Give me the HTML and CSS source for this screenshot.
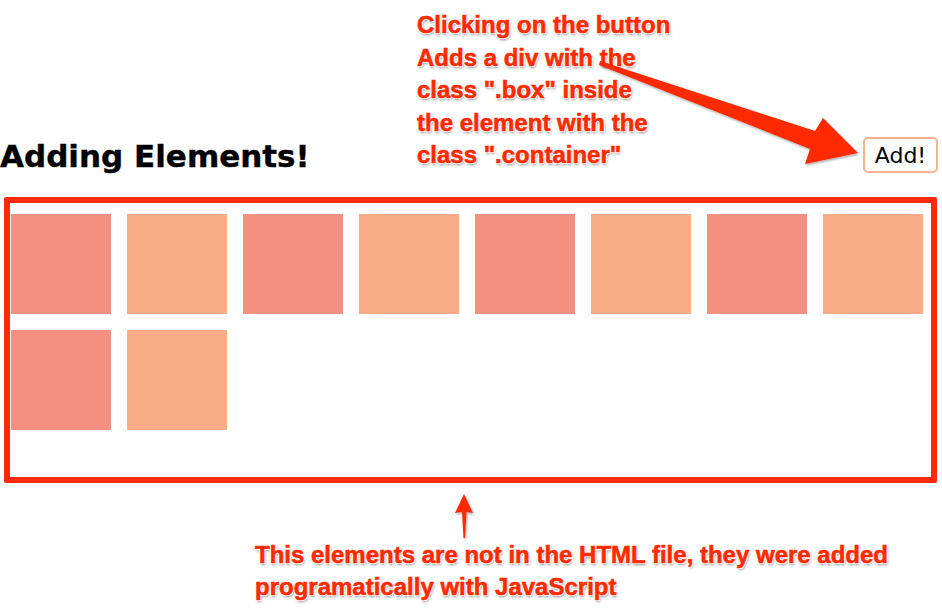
FILE: index.html
```html
<!DOCTYPE html>
<html lang="en">
<head>
<meta charset="utf-8">
<title>Adding Elements</title>
<link rel="stylesheet" href="styles.css">
</head>
<body>
<header class="top">
  <h1 class="title">Adding Elements!</h1>
  <button class="add-btn" type="button">Add!</button>
</header>
<main class="container">
  <div class="box box-a"></div>
  <div class="box box-b"></div>
  <div class="box box-a"></div>
  <div class="box box-b"></div>
  <div class="box box-a"></div>
  <div class="box box-b"></div>
  <div class="box box-a"></div>
  <div class="box box-b"></div>
  <div class="box box-a"></div>
  <div class="box box-b"></div>
</main>

<p class="note note-top">Clicking on the button<br>Adds a div with the<br>class ".box" inside<br>the element with the<br>class ".container"</p>
<p class="note note-bottom">This elements are not in the HTML file, they were added<br>programatically with JavaScript</p>

<svg class="arrows" width="942" height="611" viewBox="0 0 942 611" aria-hidden="true">
  <defs>
    <filter id="sh" x="-10%" y="-10%" width="120%" height="130%">
      <feDropShadow dx="1" dy="1.5" stdDeviation="1.2" flood-color="#000" flood-opacity="0.35"/>
    </filter>
  </defs>
  <g filter="url(#sh)" fill="#ff2a00">
    <polygon points="600,61 815,131 823,118 858,153 805,164 810,149 599,65"/>
    <polygon points="464,494 473,513 466.5,512 465,538 463.5,538 462,512 455,513"/>
  </g>
</svg>
</body>
</html>
```

FILE: styles.css
```css
html, body {
  margin: 0;
  padding: 0;
  background: #ffffff;
}

body {
  position: relative;
  width: 942px;
  height: 611px;
  overflow: hidden;
  font-family: "DejaVu Sans", Verdana, sans-serif;
}

.top {
  display: flex;
  justify-content: space-between;
  align-items: center;
  height: 36px;
  margin: 137px 4px 0 0;
}

.title {
  margin: 0;
  padding-top: 2px;
  font-family: "DejaVu Sans", Verdana, sans-serif;
  font-weight: bold;
  font-size: 31px;
  line-height: 36px;
  color: #000;
  -webkit-text-stroke: 0.4px #000;
}

.add-btn {
  box-sizing: border-box;
  width: 75px;
  height: 36px;
  padding: 0;
  background: #fff;
  border: 2px solid #f9b393;
  border-radius: 5px;
  font-family: "DejaVu Sans", Verdana, sans-serif;
  font-size: 22px;
  color: #000;
}

.container {
  box-sizing: border-box;
  display: flex;
  flex-wrap: wrap;
  align-content: flex-start;
  gap: 16px;
  height: 286px;
  margin: 24px 5px 0 4px;
  padding: 11px 7px 0 1px;
  border: 6px solid #ff2a00;
  border-radius: 2px;
}

.box {
  width: 100px;
  height: 100px;
}

.box-a {
  background: #f4907f;
}

.box-b {
  background: #f9ad86;
}

.note {
  position: absolute;
  margin: 0;
  font-family: "Liberation Sans", Arial, sans-serif;
  font-weight: bold;
  font-size: 24px;
  line-height: 32.5px;
  color: #ff2a00;
  -webkit-text-stroke: 0.6px #ff2a00;
  text-shadow: 0 0 1px #fff, 1px 1px 0 #fff, -1px -1px 0 #fff, 1px -1px 0 #fff, -1px 1px 0 #fff, 1px 2px 3px rgba(0, 0, 0, 0.45);
  white-space: nowrap;
}

.note-top {
  left: 417px;
  top: 9px;
}

.note-bottom {
  left: 255px;
  top: 539px;
  line-height: 32px;
}

.arrows {
  position: absolute;
  left: 0;
  top: 0;
  pointer-events: none;
}
```
